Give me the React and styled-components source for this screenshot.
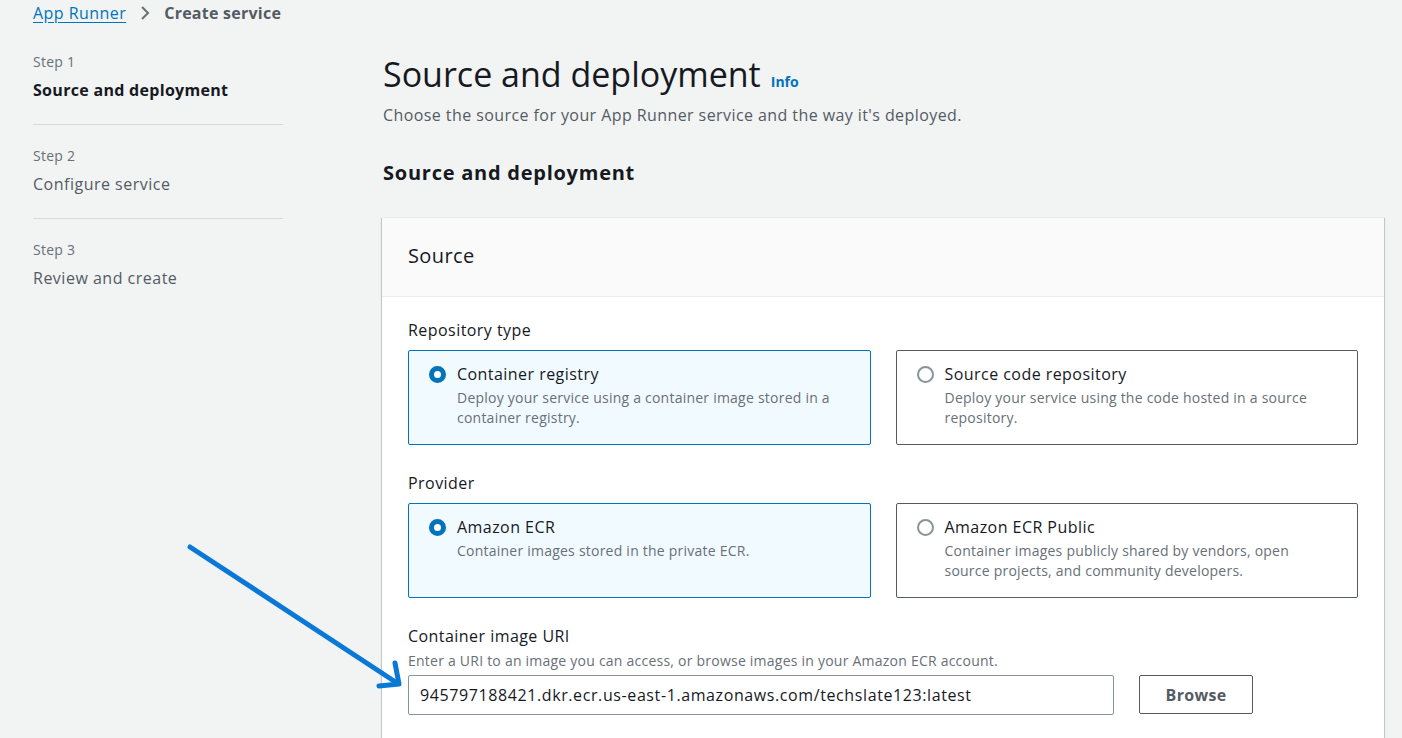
import React from "react";
import styled, { createGlobalStyle } from "styled-components";

const Global = createGlobalStyle`
  html, body { margin: 0; padding: 0; background: #f2f3f3; }
  body { font-family: "Open Sans", "Noto Sans", Arial, sans-serif; color: #16191f; overflow: hidden; }
  * { box-sizing: border-box; }
`;

const Page = styled.div`
  position: relative;
  width: 1402px;
  height: 738px;
  overflow: hidden;
  background: #f2f3f3;
  padding: 0 18px 0 33px;
`;

const Breadcrumbs = styled.nav`
  display: flex;
  align-items: center;
  gap: 14px;
  height: 26px;
  font-size: 16px;
  letter-spacing: 0.45px;
`;

const Crumb = styled.a`
  color: #0073bb;
  text-decoration: underline;
  text-underline-offset: 3px;
`;

const CrumbCurrent = styled.span`
  color: #545b64;
  font-weight: 700;
  letter-spacing: 0.25px;
`;

const Layout = styled.div`
  display: grid;
  grid-template-columns: 250px 1002px;
  column-gap: 99px;
`;

const Steps = styled.ol`
  list-style: none;
  margin: 0;
  padding: 26px 0 0 0;
`;

const StepItem = styled.li`
  padding: ${(p) => (p.$first ? "0 0 23px" : "21px 0 23px")};
  border-bottom: ${(p) => (p.$last ? "none" : "1px solid #d5dbdb")};
`;

const StepNum = styled.div`
  font-size: 14px;
  line-height: 20px;
  color: #687078;
  letter-spacing: 0.25px;
`;

const StepName = styled.div`
  font-size: 16px;
  line-height: 22px;
  margin-top: 7px;
  color: ${(p) => (p.$active ? "#16191f" : "#545b64")};
  font-weight: ${(p) => (p.$active ? 700 : 400)};
  letter-spacing: ${(p) => (p.$active ? "0.3px" : "0.5px")};
`;

const Main = styled.main`
  padding-top: 27px;
`;

const TitleRow = styled.div`
  display: flex;
  align-items: baseline;
  gap: 10px;
  padding-left: 1px;
`;

const H1 = styled.h1`
  margin: 0;
  font-size: 34px;
  line-height: 42px;
  font-weight: 400;
  color: #16191f;
`;

const Info = styled.a`
  font-size: 14px;
  font-weight: 700;
  color: #0073bb;
`;

const Lead = styled.p`
  margin: 9px 0 0 1px;
  font-size: 16px;
  line-height: 22px;
  color: #545b64;
  letter-spacing: 0.42px;
`;

const H2 = styled.h2`
  margin: 33px 0 0 1px;
  font-size: 20px;
  line-height: 28px;
  font-weight: 700;
  letter-spacing: 0.75px;
`;

const Card = styled.section`
  margin-top: 30px;
  background: #fff;
  box-shadow: 0 1px 1px 0 rgba(0, 28, 36, 0.3), 1px 1px 1px 0 rgba(0, 28, 36, 0.15),
    -1px 1px 1px 0 rgba(0, 28, 36, 0.15);
  border-top: 1px solid #eaeded;
`;

const CardHeader = styled.header`
  height: 79px;
  display: flex;
  align-items: center;
  padding: 0 26px 4px;
  background: #fafafa;
  border-bottom: 1px solid #eaeded;
  font-size: 20px;
  letter-spacing: 0.4px;
  color: #16191f;
`;

const CardBody = styled.div`
  padding: 22px 26px 40px;
`;

const Field = styled.div`
  & + & {
    margin-top: 27px;
  }
`;

const Label = styled.div`
  font-size: 16px;
  line-height: 22px;
  color: #16191f;
  letter-spacing: 0.45px;
`;

const Hint = styled.div`
  font-size: 14px;
  line-height: 20px;
  color: #687078;
  margin-top: 4px;
  letter-spacing: 0.23px;
`;

const Tiles = styled.div`
  display: grid;
  grid-template-columns: 1fr 1fr;
  gap: 25px;
  margin-top: 9px;
`;

const Tile = styled.label`
  display: flex;
  gap: 11px;
  height: 95px;
  padding: 12px 20px 12px 20px;
  border-radius: 2px;
  border: 1px solid ${(p) => (p.$selected ? "#0073bb" : "#545b64")};
  background: ${(p) => (p.$selected ? "#f1faff" : "#fff")};
`;

const Radio = styled.span`
  flex: none;
  width: 17px;
  height: 17px;
  margin-top: 3px;
  border-radius: 50%;
  border: ${(p) => (p.$checked ? "5px solid #0073bb" : "2px solid #879596")};
  background: #fff;
`;

const TileText = styled.div`
  display: flex;
  flex-direction: column;
`;

const TileTitle = styled.div`
  font-size: 16px;
  line-height: 22px;
  color: #16191f;
  letter-spacing: 0.45px;
`;

const TileDesc = styled.div`
  font-size: 14px;
  line-height: 20px;
  color: #687078;
  margin-top: 3px;
  letter-spacing: 0.23px;
`;

const InputRow = styled.div`
  display: flex;
  align-items: flex-start;
  gap: 25px;
  margin-top: 4px;
`;

const Input = styled.div`
  width: 706px;
  height: 40px;
  display: flex;
  align-items: center;
  padding: 0 11px;
  border: 1px solid #879596;
  border-radius: 2px;
  font-size: 16px;
  letter-spacing: 0.6px;
  color: #16191f;
`;

const Button = styled.button`
  width: 114px;
  height: 39px;
  border: 1px solid #545b64;
  border-radius: 2px;
  background: #fff;
  color: #545b64;
  font-family: inherit;
  font-size: 16px;
  font-weight: 700;
  letter-spacing: 0.3px;
`;

const Arrow = styled.svg`
  position: absolute;
  left: 0;
  top: 0;
  pointer-events: none;
`;

const RadioTile = ({ selected, title, desc }) => (
  <Tile $selected={selected}>
    <Radio $checked={selected} />
    <TileText>
      <TileTitle>{title}</TileTitle>
      <TileDesc>{desc}</TileDesc>
    </TileText>
  </Tile>
);

export default function App() {
  return (
    <>
      <Global />
      <Page>
        <Breadcrumbs>
          <Crumb>App Runner</Crumb>
          <svg width="10" height="16" viewBox="0 0 10 16">
            <path d="M2 2l6 6-6 6" fill="none" stroke="#687078" strokeWidth="2" />
          </svg>
          <CrumbCurrent>Create service</CrumbCurrent>
        </Breadcrumbs>
        <Layout>
          <Steps>
            <StepItem $first>
              <StepNum>Step 1</StepNum>
              <StepName $active>Source and deployment</StepName>
            </StepItem>
            <StepItem>
              <StepNum>Step 2</StepNum>
              <StepName>Configure service</StepName>
            </StepItem>
            <StepItem $last>
              <StepNum>Step 3</StepNum>
              <StepName>Review and create</StepName>
            </StepItem>
          </Steps>
          <Main>
            <TitleRow>
              <H1>Source and deployment</H1>
              <Info>Info</Info>
            </TitleRow>
            <Lead>Choose the source for your App Runner service and the way it's deployed.</Lead>
            <H2>Source and deployment</H2>
            <Card>
              <CardHeader>Source</CardHeader>
              <CardBody>
                <Field>
                  <Label>Repository type</Label>
                  <Tiles>
                    <RadioTile
                      selected
                      title="Container registry"
                      desc="Deploy your service using a container image stored in a container registry."
                    />
                    <RadioTile
                      title="Source code repository"
                      desc="Deploy your service using the code hosted in a source repository."
                    />
                  </Tiles>
                </Field>
                <Field>
                  <Label>Provider</Label>
                  <Tiles>
                    <RadioTile
                      selected
                      title="Amazon ECR"
                      desc="Container images stored in the private ECR."
                    />
                    <RadioTile
                      title="Amazon ECR Public"
                      desc="Container images publicly shared by vendors, open source projects, and community developers."
                    />
                  </Tiles>
                </Field>
                <Field>
                  <Label>Container image URI</Label>
                  <Hint>Enter a URI to an image you can access, or browse images in your Amazon ECR account.</Hint>
                  <InputRow>
                    <Input>945797188421.dkr.ecr.us-east-1.amazonaws.com/techslate123:latest</Input>
                    <Button>Browse</Button>
                  </InputRow>
                </Field>
              </CardBody>
            </Card>
          </Main>
        </Layout>
        <Arrow width="1402" height="738" viewBox="0 0 1402 738">
          <path d="M190 547 L397 683" stroke="#0a78d6" strokeWidth="5" strokeLinecap="round" fill="none" />
          <path d="M379 686 L399 684 L395 663" stroke="#0a78d6" strokeWidth="5" strokeLinecap="round" strokeLinejoin="round" fill="none" />
        </Arrow>
      </Page>
    </>
  );
}
